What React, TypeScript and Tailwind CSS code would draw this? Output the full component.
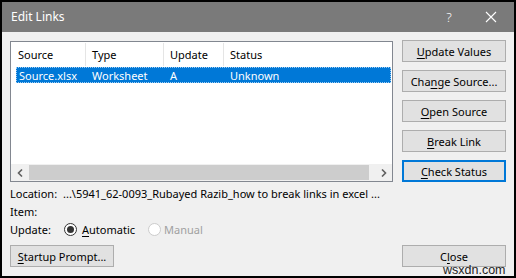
import React from "react";

const Key = ({ children }: { children: React.ReactNode }) => <span className="underline underline-offset-[2px]">{children}</span>;

const Btn = ({ children, focused }: { children: React.ReactNode; focused?: boolean }) => (
    <div
        className={`h-[22px] w-[104px] flex items-center justify-center bg-[#e1e1e1] text-black ${
            focused ? "border-2 border-[#0078d7]" : "border border-[#adadad]"
        }`}
    >
        {children}
    </div>
);

const Chevron = ({ dir }: { dir: "left" | "right" }) => (
    <svg width="6" height="8" viewBox="0 0 6 8" className="text-[#606060]">
        <path d={dir === "left" ? "M5 0.5L1.5 4L5 7.5" : "M1 0.5L4.5 4L1 7.5"} fill="none" stroke="currentColor" strokeWidth="1.6" />
    </svg>
);

export default function App() {
    return (
        <div className="relative w-[516px] h-[278px] bg-black p-[2px] flex flex-col font-['Segoe_UI','Noto_Sans',sans-serif] text-[11px] leading-none text-black">
            {/* title bar */}
            <div className="h-[30px] bg-[#7a7a7a] flex items-center pl-[9px] text-white">
                <span className="flex-1 text-[12px]">Edit Links</span>
                <span className="w-[14px] text-center text-[13px] font-light mr-[29px]">?</span>
                <svg width="12" height="12" viewBox="0 0 12 12" className="mr-[17px]">
                    <path d="M1 1L11 11M11 1L1 11" stroke="white" strokeWidth="1.1" />
                </svg>
            </div>

            {/* body */}
            <div className="flex-1 bg-[#f0f0f0] flex flex-col px-[8px] pt-[8px] pb-[9px]">
                <div className="flex gap-[9px]">
                    {/* list view */}
                    <div className="mt-[1px] w-[383px] h-[141px] border border-[#828790] bg-white flex flex-col">
                        <div className="h-[25px] flex items-stretch pt-[1px] pb-[1px]">
                            <div className="w-[74px] pl-[7px] flex items-center">Source</div>
                            <div className="w-px bg-[#e5e5e5]" />
                            <div className="w-[77px] pl-[6px] flex items-center">Type</div>
                            <div className="w-px bg-[#e5e5e5]" />
                            <div className="w-[59px] pl-[6px] flex items-center">Update</div>
                            <div className="w-px bg-[#e5e5e5]" />
                            <div className="flex-1 pl-[6px] flex items-center">Status</div>
                        </div>
                        <div className="ml-[5px] mr-px h-[16px] bg-[#0078d7] border border-dotted border-[#9fcdf2] text-white flex items-center">
                            <div className="w-[69px] pl-[2px]">Source.xlsx</div>
                            <div className="w-[78px] pl-[6px]">Worksheet</div>
                            <div className="w-[60px] pl-[6px]">A</div>
                            <div className="flex-1 pl-[6px]">Unknown</div>
                        </div>
                        <div className="flex-1" />
                        <div className="h-[17px] bg-[#f0f0f0] flex items-stretch">
                            <div className="w-[17px] flex items-center justify-center">
                                <Chevron dir="left" />
                            </div>
                            <div className="ml-px w-[340px] my-[1px] bg-[#cdcdcd]" />
                            <div className="flex-1" />
                            <div className="w-[17px] flex items-center justify-center">
                                <Chevron dir="right" />
                            </div>
                        </div>
                    </div>

                    {/* buttons */}
                    <div className="flex flex-col gap-[8px]">
                        <Btn>
                            <Key>U</Key>pdate Values
                        </Btn>
                        <Btn>
                            Cha<Key>n</Key>ge Source...
                        </Btn>
                        <Btn>
                            <Key>O</Key>pen Source
                        </Btn>
                        <Btn>
                            <Key>B</Key>reak Link
                        </Btn>
                        <Btn focused>
                            <Key>C</Key>heck Status
                        </Btn>
                    </div>
                </div>

                {/* info rows */}
                <div className="mt-[2px] flex flex-col">
                    <div className="h-[18px] flex items-center whitespace-nowrap">
                        <span className="w-[53px]">Location:</span>
                        <span>...\5941_62-0093_Rubayed Razib_how to break links in excel ...</span>
                    </div>
                    <div className="h-[18px] flex items-center">
                        <span className="w-[53px]">Item:</span>
                    </div>
                    <div className="h-[18px] flex items-center">
                        <span className="w-[54px]">Update:</span>
                        <span className="w-[13px] h-[13px] rounded-full border border-[#333333] bg-white flex items-center justify-center">
                            <span className="w-[7px] h-[7px] rounded-full bg-[#333333]" />
                        </span>
                        <span className="ml-[5px]">
                            <Key>A</Key>utomatic
                        </span>
                        <span className="ml-[13px] w-[13px] h-[13px] rounded-full border border-[#cccccc] bg-white" />
                        <span className="ml-[3px] text-[#a0a0a0]">Manual</span>
                    </div>
                </div>

                {/* bottom buttons */}
                <div className="mt-auto flex justify-between">
                    <Btn>
                        <Key>S</Key>tartup Prompt...
                    </Btn>
                    <Btn>
                        C<Key>l</Key>ose
                    </Btn>
                </div>
            </div>

            {/* watermark */}
            <span className="absolute left-[443px] top-[264px] text-[12.5px] leading-none font-['Liberation_Sans',sans-serif] text-[#222222]">
                wsxdn.com
            </span>
        </div>
    );
}
